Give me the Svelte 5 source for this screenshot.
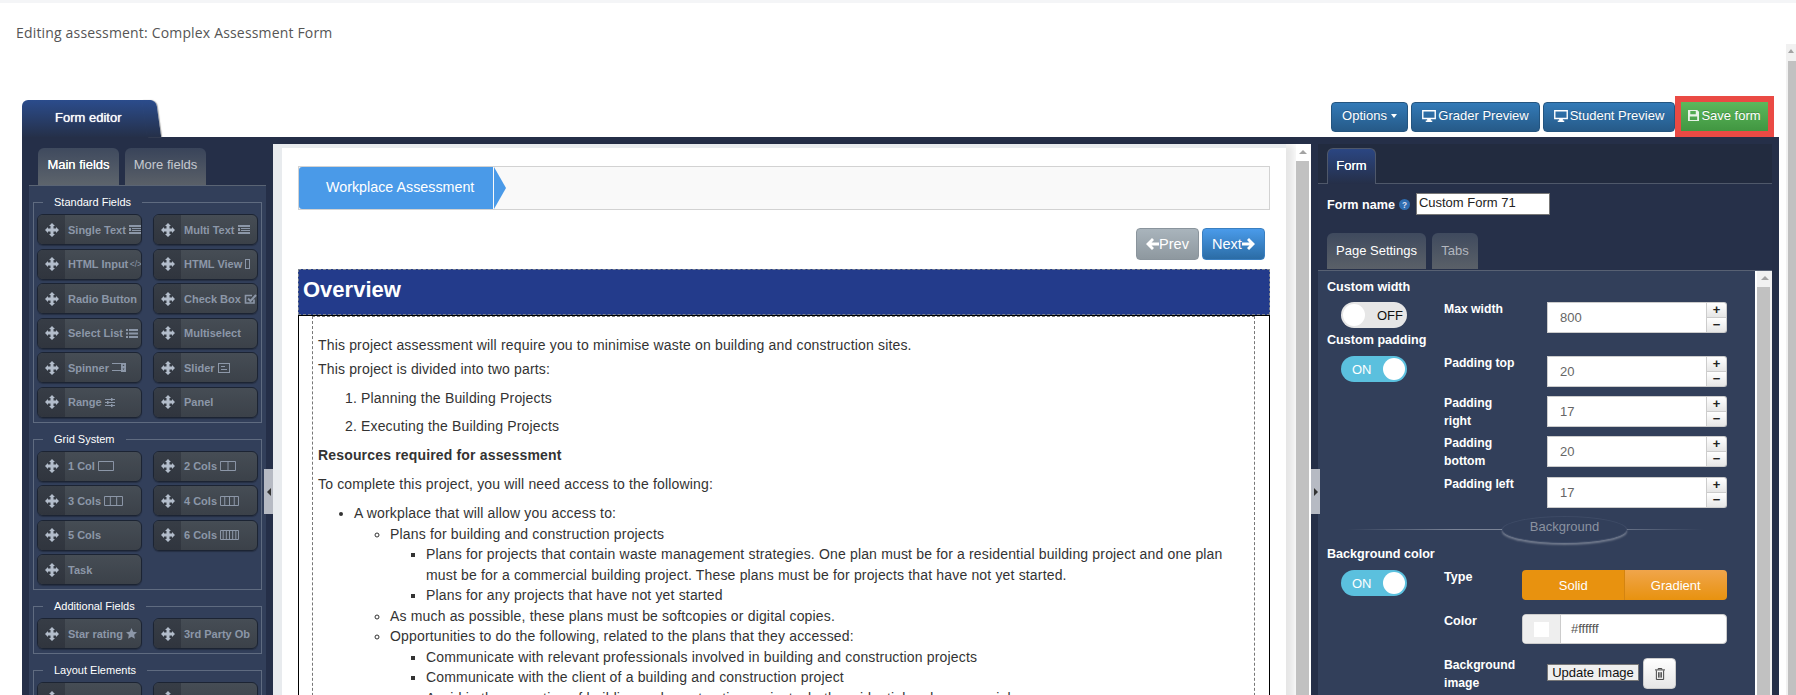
<script>
  const standard = [
    { t: 'Single Text', i: 'input' }, { t: 'Multi Text', i: 'input' },
    { t: 'HTML Input', i: 'code' }, { t: 'HTML View', i: 'tofu' },
    { t: 'Radio Button' }, { t: 'Check Box', i: 'check' },
    { t: 'Select List', i: 'list' }, { t: 'Multiselect' },
    { t: 'Spinner', i: 'spin' }, { t: 'Slider', i: 'slider' },
    { t: 'Range', i: 'range' }, { t: 'Panel' }
  ];
  const grid = [
    { t: '1 Col', c: 1 }, { t: '2 Cols', c: 2 }, { t: '3 Cols', c: 3 },
    { t: '4 Cols', c: 4 }, { t: '5 Cols' }, { t: '6 Cols', c: 6 }, { t: 'Task' }
  ];
  const additional = [{ t: 'Star rating', i: 'star' }, { t: '3rd Party Ob' }];
  const layout = [{ t: '' }, { t: '' }];
  const paddings = [
    { l: 'Padding top', v: '20', g: 9 },
    { l: 'Padding right', v: '17', g: 9 },
    { l: 'Padding bottom', v: '20', g: 10 },
    { l: 'Padding left', v: '17', g: 0 }
  ];
</script>

{#snippet move()}
  <svg class="mv" viewBox="0 0 14 14" width="14" height="14"><path d="M7 0 10 3H8.500V5.500H11V4L14 7 11 10V8.500H8.500V11H10L7 14 4 11H5.500V8.500H3V10L0 7 3 4V5.500H5.500V3H4Z"/></svg>
{/snippet}

{#snippet icon(name)}
  {#if name === 'input'}
    <svg class="ic" viewBox="0 0 12 9" width="12" height="9"><path d="M0 0h12v2H0zM0 3h2v3H0zM3 3h9v1H3zM3 5h9v1H3zM0 7h12v2H0z"/></svg>
  {:else if name === 'code'}
    <span class="ict">&lt;/&gt;</span>
  {:else if name === 'tofu'}
    <svg class="ic" viewBox="0 0 5 10" width="5" height="10"><rect x=".5" y=".5" width="4" height="9" fill="none" stroke="currentColor"/></svg>
  {:else if name === 'check'}
    <svg class="ic" viewBox="0 0 13 12" width="13" height="12"><path d="M10 6.500V10H1.500V2.500H8" fill="none" stroke="currentColor" stroke-width="1.600"/><path d="M4 5.500 6.500 8 12 2" fill="none" stroke="currentColor" stroke-width="2"/></svg>
  {:else if name === 'list'}
    <svg class="ic" viewBox="0 0 12 9" width="12" height="9"><path d="M0 0h2v2H0zM3 0h9v2H3zM0 3.500h2v2H0zM3 3.500h9v2H3zM0 7h2v2H0zM3 7h9v2H3z"/></svg>
  {:else if name === 'spin'}
    <svg class="ic" viewBox="0 0 14 9" width="14" height="9"><path d="M0 .5h10M0 7.500h10" fill="none" stroke="currentColor"/><path d="M9 0h5v9H9zM10.500 3h2L11.500 1.500zM10.500 5.500h2L11.500 7z" fill-rule="evenodd"/></svg>
  {:else if name === 'slider'}
    <svg class="ic" viewBox="0 0 12 10" width="12" height="10"><rect x=".5" y=".5" width="11" height="9" fill="none" stroke="currentColor"/><path d="M3 3h4v1H3zM3 6h6v1H3z"/></svg>
  {:else if name === 'range'}
    <svg class="ic" viewBox="0 0 10 9" width="10" height="9"><path d="M0 1h10v1H0zM0 4h10v1H0zM0 7h10v1H0zM6 0h1.500v3H6zM2 3h1.500v3H2zM6 6h1.500v3H6z"/></svg>
  {:else if name === 'star'}
    <svg class="ic" viewBox="0 0 12 12" width="11" height="11"><path d="M6 0 7.800 4 12 4.500 8.900 7.400 9.700 11.800 6 9.600 2.300 11.800 3.100 7.400 0 4.500 4.200 4Z"/></svg>
  {/if}
{/snippet}

{#snippet cols(n)}
  <svg class="ic" viewBox="0 0 18 10" width={n < 3 ? 16 : 19} height="10" preserveAspectRatio="none">
    <rect x=".5" y=".5" width="17" height="9" fill="none" stroke="currentColor" vector-effect="non-scaling-stroke"/>
    {#each Array(n - 1) as _, k}
      <path d="M{(18 / n) * (k + 1)} 0V10" stroke="currentColor" vector-effect="non-scaling-stroke"/>
    {/each}
  </svg>
{/snippet}

{#snippet field(f)}
  <div class="fb">
    <span class="grip">{@render move()}</span>
    <span class="fl">{f.t}{#if f.i}{@render icon(f.i)}{/if}{#if f.c}{@render cols(f.c)}{/if}</span>
  </div>
{/snippet}

{#snippet monitor()}
  <svg viewBox="0 0 15 13" width="14" height="12" class="bi"><path d="M0 0h15v10H9.500v1.500H11V13H4v-1.500h1.500V10H0ZM1.500 1.500v7h12v-7Z" fill-rule="evenodd"/></svg>
{/snippet}

{#snippet spinbox(v)}
  <div class="num">
    <input value={v} readonly />
    <div class="spin"><span>+</span><span>−</span></div>
  </div>
{/snippet}

<div class="page">
  <div class="strip"></div>
  <div class="title">Editing assessment: Complex Assessment Form</div>

  <div class="bar">
    <div class="maintab">Form editor</div>
    <div class="actions">
      <button class="btn blue opt">Options<i class="caret"></i></button>
      <button class="btn blue grader">{@render monitor()}Grader Preview</button>
      <button class="btn blue student">{@render monitor()}Student Preview</button>
      <div class="redbox">
        <button class="btn green">
          <svg viewBox="0 0 12 12" width="11" height="11" class="bi"><path d="M0 0h10l2 2v10H0ZM2.500 1v3.500h6V1ZM2 7v4h8V7Z" fill-rule="evenodd"/></svg>
          Save form
        </button>
      </div>
    </div>
  </div>

  <div class="work">
    <aside class="left">
      <div class="ltabs">
        <div class="tb on">Main fields</div>
        <div class="tb">More fields</div>
      </div>
      <div class="lpanel">
        <div class="fs">
          <div class="lg">Standard Fields</div>
          <div class="fg">{#each standard as f}{@render field(f)}{/each}</div>
        </div>
        <div class="fs">
          <div class="lg">Grid System</div>
          <div class="fg">{#each grid as f}{@render field(f)}{/each}</div>
        </div>
        <div class="fs">
          <div class="lg">Additional Fields</div>
          <div class="fg">{#each additional as f}{@render field(f)}{/each}</div>
        </div>
        <div class="fs">
          <div class="lg">Layout Elements</div>
          <div class="fg">{#each layout as f}{@render field(f)}{/each}</div>
        </div>
      </div>
      <div class="handle hl"><i class="tl"></i></div>
    </aside>

    <main class="center">
      <div class="sheet">
        <div class="crumb"><div class="step">Workplace Assessment</div><i class="arrow"></i></div>
        <div class="nav">
          <button class="nb prev"><svg viewBox="0 0 13 12" width="13" height="12"><path d="M6 0 8 2 5.500 4.500H13v3H5.500L8 10 6 12 0 6Z"/></svg>Prev</button>
          <button class="nb next">Next<svg viewBox="0 0 13 12" width="13" height="12"><path d="M7 0 5 2 7.500 4.500H0v3h7.500L5 10 7 12 13 6Z"/></svg></button>
        </div>
        <h2 class="ov">Overview</h2>
        <div class="body">
          <div class="inner">
            <p class="tight">This project assessment will require you to minimise waste on building and construction sites.</p>
            <p>This project is divided into two parts:</p>
            <ol>
              <li>Planning the Building Projects</li>
              <li>Executing the Building Projects</li>
            </ol>
            <p><strong>Resources required for assessment</strong></p>
            <p>To complete this project, you will need access to the following:</p>
            <ul>
              <li>A workplace that will allow you access to:
                <ul>
                  <li>Plans for building and construction projects
                    <ul>
                      <li>Plans for projects that contain waste management strategies. One plan must be for a residential building project and one plan must be for a commercial building project. These plans must be for projects that have not yet started.</li>
                      <li>Plans for any projects that have not yet started</li>
                    </ul>
                  </li>
                  <li>As much as possible, these plans must be softcopies or digital copies.</li>
                  <li>Opportunities to do the following, related to the plans that they accessed:
                    <ul>
                      <li>Communicate with relevant professionals involved in building and construction projects</li>
                      <li>Communicate with the client of a building and construction project</li>
                      <li>Avoid in the execution of building and construction projects, both residential and commercial</li>
                    </ul>
                  </li>
                </ul>
              </li>
            </ul>
          </div>
        </div>
      </div>
      <div class="vscroll mid"><i class="up"></i><i class="thumb"></i></div>
    </main>

    <aside class="right">
      <div class="handle hr"><i class="tr"></i></div>
      <div class="rtop">
        <div class="rtabs"><div class="formtab">Form</div></div>
        <div class="namerow">
          <span class="lb">Form name</span>
          <svg viewBox="0 0 12 12" width="11" height="11" class="help"><circle cx="6" cy="6" r="6" fill="#2f6db0"/><text x="6" y="9.500" text-anchor="middle" font-size="9" font-weight="700" fill="#dde">?</text></svg>
          <input class="nm" value="Custom Form 71" readonly />
        </div>
        <div class="stabs">
          <div class="st on">Page Settings</div>
          <div class="st">Tabs</div>
        </div>
      </div>
      <div class="rbody">
        <div class="rform">
          <div class="split one">
            <div class="lcol">
              <div class="lb h">Custom width</div>
              <div class="tg off"><i></i><span>OFF</span></div>
              <div class="lb h pad">Custom padding</div>
              <div class="tg on"><span>ON</span><i></i></div>
            </div>
            <div class="rcol">
              <div class="row first">
                <div class="lb k">Max width</div>
                {@render spinbox('800')}
              </div>
              {#each paddings as p}
                <div class="row" style="margin-bottom:{p.g}px">
                  <div class="lb k">{p.l}</div>
                  {@render spinbox(p.v)}
                </div>
              {/each}
            </div>
          </div>

          <div class="divider"><div class="ell">Background</div></div>

          <div class="lb h bgc">Background color</div>
          <div class="split two">
            <div class="lcol"><div class="tg on"><span>ON</span><i></i></div></div>
            <div class="rcol">
              <div class="row2">
                <div class="lb k2">Type</div>
                <div class="seg"><div class="active">Solid</div><div>Gradient</div></div>
              </div>
              <div class="row2">
                <div class="lb k2">Color</div>
                <div class="clr"><span class="sw"><i></i></span><span class="hex">#ffffff</span></div>
              </div>
              <div class="row3">
                <div class="lb k">Background image</div>
                <button class="upd">Update Image</button>
                <button class="trash" aria-label="Delete image">
                  <svg viewBox="0 0 11 13" width="10" height="12"><path d="M3.500 1.500V.500h4v1M0 2h11M1.500 2.500V12.500h8V2.500M4 4.500v6M5.500 4.500v6M7 4.500v6" fill="none" stroke="#333"/></svg>
                </button>
              </div>
            </div>
          </div>
        </div>
        <div class="vscroll inn"><i class="up"></i><i class="thumb"></i></div>
      </div>
    </aside>
  </div>

  <div class="vscroll pagesb"><i class="up"></i><i class="thumb"></i></div>
</div>

<style>
  :global(html), :global(body) { margin: 0; overflow: hidden; background: #fff; }
  .page { position: relative; width: 1796px; height: 695px; overflow: hidden; font-family: "Liberation Sans", Arial, sans-serif; background: #fff; }
  button { font-family: inherit; cursor: pointer; }
  .strip { height: 3px; background: #f4f5f7; }
  .title { font-family: "Open Sans", sans-serif; font-size: 14px; line-height: 20px; color: #555; padding: 20px 0 0 16px; height: 20px; letter-spacing: .17px; }

  .bar { display: flex; justify-content: space-between; align-items: flex-end; margin: 0 22px; height: 94px; }
  .maintab { position: relative; width: 133px; height: 37px; box-sizing: border-box; border-radius: 6px 6px 0 0; background: linear-gradient(#2b4c8c, #253049); color: #fff; font-size: 13px; line-height: 35px; padding-left: 33px; text-shadow: 0 0 1px #fff; }
  .maintab::after { content: ""; position: absolute; right: -1px; top: 0; width: 14px; height: 37px; background: linear-gradient(#2b4c8c, #253049); border-radius: 0 6px 0 0; transform: skewX(8deg); transform-origin: top left; box-shadow: 1px 0 1px #aaa; }
  .actions { display: flex; align-items: flex-end; height: 41px; }
  .btn { height: 30px; box-sizing: border-box; margin: 0 3px 5px 0; padding: 0 0 3px; border: 1px solid #245580; border-radius: 4px; color: #fff; font-size: 13px; display: flex; align-items: center; justify-content: center; gap: 2px; text-shadow: 0 -1px 0 rgba(0, 0, 0, .2); }
  .blue { background: linear-gradient(#337ab7, #265a88); }
  .opt { width: 77px; }
  .grader { width: 129px; }
  .student { width: 132px; margin-right: 0; }
  .caret { display: inline-block; border-top: 4px solid #fff; border-left: 3px solid transparent; border-right: 3px solid transparent; margin-left: 2px; }
  .bi { fill: #fff; flex: none; }
  .redbox { box-sizing: border-box; width: 99px; height: 41px; border: 6px solid #ea4a44; }
  .green { width: 87px; height: 29px; margin: 0; border: 0; border-radius: 0; background: linear-gradient(#5cb85c, #419641); }
  .green .bi { fill: #e6f3e6; }

  .work { display: flex; margin: 0 17px 0 22px; height: 558px; background: #252f48; }

  .left { width: 250px; flex: none; position: relative; }
  .ltabs { display: flex; gap: 6px; padding: 11px 0 0 16px; height: 37px; }
  .tb { width: 81px; height: 37px; box-sizing: border-box; border-radius: 6px 6px 0 0; background: linear-gradient(#39445a, #5a6068); color: #c5c9d0; font-size: 13px; line-height: 34px; text-align: center; }
  .tb.on { color: #fff; text-shadow: 0 0 .5px #fff; background: linear-gradient(#3f4a5e, #5d646c); }
  .lpanel { margin: 0 6px 0 7px; height: 600px; background: #323f5a; border-top: 1px solid #5a6474; padding: 16px 4px 0; box-sizing: border-box; }
  .fs { position: relative; border: 1px solid #5f6b80; padding: 11px 3px 4px; margin-bottom: 16px; width: 229px; box-sizing: border-box; }
  .lg { position: absolute; top: -9px; left: 9px; padding: 0 11px; background: #323f5a; color: #fff; font-size: 11px; line-height: 16px; }
  .fg { display: grid; grid-template-columns: 105px 105px; column-gap: 11px; row-gap: 3.5px; }
  .fb { height: 31px; box-sizing: border-box; border: 1px solid #1c2433; border-radius: 6px; display: flex; overflow: hidden; background: linear-gradient(#464d55, #3b4149); box-shadow: 0 1px 1px rgba(0, 0, 0, .25); }
  .grip { width: 27px; flex: none; background: linear-gradient(#373d46, #30353e); display: flex; align-items: center; justify-content: center; }
  .mv { fill: #b3bdcb; }
  .fl { display: flex; align-items: center; gap: 3px; padding-left: 3px; font-size: 11px; font-weight: 700; color: #8c97a8; white-space: nowrap; }
  .ic { fill: currentColor; flex: none; }
  .ict { font-size: 8.5px; font-weight: 400; margin-left: -1.5px; }
  .handle { position: absolute; background: #b6bac3; height: 45px; width: 9px; top: 332px; display: flex; align-items: center; justify-content: center; z-index: 3; }
  .hl { right: -1px; }
  .tl { border-right: 4px solid #333; border-top: 4px solid transparent; border-bottom: 4px solid transparent; }
  .tr { border-left: 4px solid #333; border-top: 4px solid transparent; border-bottom: 4px solid transparent; }

  .center { width: 1039px; flex: none; position: relative; display: flex; padding-top: 7px; box-sizing: border-box; border-left: 1px solid #252f48; background: linear-gradient(#252f48 7px, #fff 7px); overflow: hidden; }
  .sheet { box-sizing: border-box; height: 600px; width: 1013px; flex: none; border-left: 9px solid #e8ebee; border-top: 4px solid #e8ebee; background: #fff; box-shadow: 8px 0 8px rgba(0, 0, 0, .1); padding: 18px 15px 0 16px; }
  .crumb { position: relative; height: 44px; box-sizing: border-box; border: 1px solid #d2d2d2; background: #f9f9f9; width: 972px; }
  .step { width: 194px; height: 42px; border-radius: 3px 0 0 3px; background: #4a9ae8; color: #fff; font-size: 14.3px; line-height: 40px; padding-left: 27px; box-sizing: border-box; }
  .arrow { position: absolute; left: 195px; top: 0; border-left: 12px solid #4a9ae8; border-top: 21px solid transparent; border-bottom: 21px solid transparent; }
  .nav { display: flex; justify-content: flex-end; gap: 3px; width: 967px; padding-top: 18px; height: 32px; margin-bottom: 9px; }
  .nb { width: 63px; height: 32px; padding: 0; border-radius: 4px; border: 1px solid #8a949c; color: #fff; font-size: 14.5px; display: flex; align-items: center; justify-content: center; }
  .nb svg { fill: #fff; }
  .prev { background: linear-gradient(#a9b4bc, #8e989f); }
  .next { background: linear-gradient(#4a9bea, #2b6ca5); border-color: #3a7fc0; }
  .ov { margin: 0; box-sizing: border-box; height: 46px; width: 972px; background: #233b8b; border: 1px dashed #7d8490; color: #fff; font-size: 22px; line-height: 40px; padding-left: 4px; }
  .body { width: 972px; box-sizing: border-box; border: 1px solid #000; border-bottom: 0; height: 400px; padding: 0 14px 0 13px; }
  .inner { border: 1px dashed #777; border-bottom: 0; padding: 18px 5px 0; height: 400px; box-sizing: border-box; color: #333; font-size: 14px; line-height: 20px; letter-spacing: .165px; }
  p { margin: 0 0 9px; }
  p.tight { margin-bottom: 4px; }
  ol { margin: 0; padding-left: 43px; }
  ol li { margin-bottom: 8px; }
  ol li:last-child { margin-bottom: 9px; }
  ul { margin: 0; padding-left: 36px; }
  ul li { line-height: 20.5px; }

  .vscroll { position: absolute; background: #f1f1f1; display: block; }
  .vscroll i { display: block; }
  .up { height: 0; width: 0; border-left: 4px solid transparent; border-right: 4px solid transparent; border-bottom: 4px solid #a3a3a3; margin: 5px auto 6px; }
  .thumb { background: #c1c1c1; height: 1000px; }
  .mid { left: 1023px; top: 7px; width: 13px; height: 600px; background: #fff; }
  .mid .up { margin: 6px auto 7px; }
  .pagesb { right: 0; top: 44px; width: 10px; height: 700px; }
  .pagesb .thumb { margin-left: 2px; }
  .pagesb .up { margin-left: 2px; margin-bottom: 8px; border-left-width: 3px; border-right-width: 3px; }

  .right { width: 468px; flex: none; position: relative; padding-top: 7px; box-sizing: border-box; }
  .hr { left: 0; }
  .rtop { margin-left: 7px; width: 454px; height: 126px; background: linear-gradient(#222b3f 0 40px, #263049 40px); }
  .rtabs { height: 40px; border-bottom: 1px solid #4f586a; box-sizing: border-box; padding: 4px 0 0 9px; }
  .formtab { width: 49px; height: 36px; box-sizing: border-box; border: 1px solid #4f586a; border-bottom: 0; border-radius: 6px 6px 0 0; background: linear-gradient(#2b4682, #252f48); color: #fff; font-size: 13px; line-height: 33px; text-align: center; text-shadow: 0 0 .5px #fff; }
  .namerow { display: flex; align-items: flex-start; height: 49px; padding: 9px 0 0 9px; box-sizing: border-box; }
  .lb { color: #fff; font-size: 12.6px; font-weight: 700; line-height: 18px; }
  .namerow .lb { margin-top: 3px; }
  .help { margin: 6px 0 0 4px; }
  .nm { margin-left: 6px; width: 134px; height: 22px; box-sizing: border-box; border: 1px solid #777; padding: 0 2px 4px; font: 13px "Liberation Sans", sans-serif; color: #222; outline: 0; }
  .stabs { display: flex; gap: 6px; padding: 0 0 0 9px; height: 37px; }
  .st { height: 36px; width: 99px; box-sizing: border-box; border-radius: 6px 6px 0 0; background: linear-gradient(#3f4a5e, #5a6068); color: #fff; font-size: 13px; line-height: 36px; text-align: center; }
  .st + .st { width: 46px; color: #b3b7bf; }
  .rbody { margin-left: 7px; width: 454px; position: relative; height: 440px; background: #323f5a; border-top: 1px solid #586173; box-sizing: border-box; }
  .inn { right: 0; top: 0; width: 17px; height: 440px; border-left: 2px solid #fff; box-sizing: border-box; }
  .inn .up { margin-bottom: 7px; }
  .inn .thumb { margin-right: 2px; }
  .rform { width: 437px; padding: 9px 0 0 9px; box-sizing: border-box; }
  .split { display: flex; }
  .lcol { width: 117px; flex: none; }
  .lb.h { white-space: nowrap; height: 22px; line-height: 14px; }
  .lb.pad { margin-top: 5px; height: 23px; }
  .tg { margin-left: 14px; width: 66px; height: 26px; border-radius: 13px; font-size: 13px; display: flex; align-items: center; justify-content: space-between; box-sizing: border-box; padding: 0 2px; }
  .tg i { width: 22px; height: 22px; border-radius: 50%; background: #fff; display: block; }
  .tg.off { background: #e6e6e6; color: #111; }
  .tg.off span { margin-right: 2px; }
  .tg.on { background: #5bc0de; color: #fff; }
  .tg.on span { margin-left: 9px; }
  .rcol { flex: 1; }
  .one .rcol { padding-top: 22px; }
  .row { display: flex; height: 31px; }
  .row.first { margin-bottom: 23px; }
  .k { box-sizing: border-box; width: 103px; padding-right: 28px; margin-top: -2px; flex: none; font-size: 12.2px; }
  .k2 { width: 78px; margin-top: -2px; flex: none; }
  .num { display: flex; width: 180px; height: 31px; }
  .num input { width: 160px; height: 31px; box-sizing: border-box; border: 1px solid #ccc; background: #fff; padding: 0 0 0 12px; font: 13px "Liberation Sans", sans-serif; color: #666; outline: 0; }
  .spin { width: 20px; height: 31px; display: flex; flex-direction: column; }
  .spin span { flex: 1; box-sizing: border-box; border: 1px solid #ccc; border-left: 0; background: linear-gradient(#fff, #e6e6e6); color: #222; font-size: 13px; font-weight: 700; line-height: 13px; text-align: center; }
  .spin span:first-child { border-radius: 0 3px 0 0; }
  .spin span:last-child { border-radius: 0 0 3px 0; border-top: 0; }

  .divider { width: 356px; height: 27px; margin: 8px 0 0 20px; background: linear-gradient(90deg, transparent, #7b8497 30%, #7b8497 70%, transparent) center / 100% 1px no-repeat; display: flex; }
  .ell { width: 125px; height: 27px; margin-left: 155px; box-sizing: border-box; border-radius: 50%; background: #323f5a; box-shadow: 0 2px 2px rgba(255, 255, 255, .3); color: #8b92a0; font-size: 13px; line-height: 20px; text-align: center; border: 1px solid #3d4a65; }
  .lb.bgc { margin-top: 4px; height: 23px; }
  .row2 { display: flex; height: 30px; margin-bottom: 14px; }
  .seg { width: 205px; height: 30px; border-radius: 4px; display: flex; color: #fff; font-size: 13px; overflow: hidden; }
  .seg div { flex: 1; display: flex; align-items: center; justify-content: center; background: linear-gradient(#f0a54b, #e8920f); }
  .seg .active { background: #e8920f; box-shadow: inset -1px 0 0 #d48410; }
  .clr { width: 205px; height: 30px; display: flex; background: #fff; border-radius: 4px; overflow: hidden; border: 1px solid #ccc; box-sizing: border-box; }
  .sw { width: 37px; background: #eee; display: flex; align-items: center; justify-content: center; border-right: 1px solid #ccc; }
  .sw i { width: 15px; height: 15px; background: #fff; }
  .hex { font-size: 13px; color: #555; line-height: 28px; padding-left: 10px; }
  .row3 { display: flex; align-items: flex-start; }
  .upd { margin: 6px 4px 0 0; width: 92px; height: 17px; padding: 0; box-sizing: border-box; border: 1px solid #777; background: #efefef; font-size: 13px; line-height: 15px; color: #111; white-space: nowrap; overflow: hidden; }
  .trash { width: 33px; height: 31px; padding: 0; border: 1px solid #ccc; border-radius: 4px; background: linear-gradient(#fff, #e6e6e6); display: flex; align-items: center; justify-content: center; }
</style>
